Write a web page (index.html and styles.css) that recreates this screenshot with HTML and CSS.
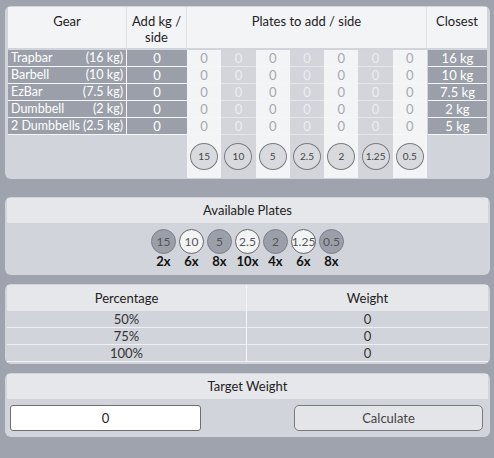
FILE: index.html
```html
<!DOCTYPE html>
<html>
<head>
<meta charset="utf-8">
<link rel="stylesheet" href="styles.css">
</head>
<body>
<main class="page">
  <section class="card gear-card">
    <div class="gear-grid">
      <div class="hd hd-gear">Gear</div>
      <div class="hd hd-add">Add kg /<br>side</div>
      <div class="hd hd-plates">Plates to add / side</div>
      <div class="hd hd-closest">Closest</div>

      <div class="cell gear"><span>Trapbar</span><span>(16 kg)</span></div>
      <div class="cell add">0</div>
      <div class="cell pl lt">0</div><div class="cell pl dk">0</div><div class="cell pl lt">0</div><div class="cell pl dk">0</div><div class="cell pl lt">0</div><div class="cell pl dk">0</div><div class="cell pl lt">0</div>
      <div class="cell closest">16 kg</div>

      <div class="cell gear"><span>Barbell</span><span>(10 kg)</span></div>
      <div class="cell add">0</div>
      <div class="cell pl lt">0</div><div class="cell pl dk">0</div><div class="cell pl lt">0</div><div class="cell pl dk">0</div><div class="cell pl lt">0</div><div class="cell pl dk">0</div><div class="cell pl lt">0</div>
      <div class="cell closest">10 kg</div>

      <div class="cell gear"><span>EzBar</span><span>(7.5 kg)</span></div>
      <div class="cell add">0</div>
      <div class="cell pl lt">0</div><div class="cell pl dk">0</div><div class="cell pl lt">0</div><div class="cell pl dk">0</div><div class="cell pl lt">0</div><div class="cell pl dk">0</div><div class="cell pl lt">0</div>
      <div class="cell closest">7.5 kg</div>

      <div class="cell gear"><span>Dumbbell</span><span>(2 kg)</span></div>
      <div class="cell add">0</div>
      <div class="cell pl lt">0</div><div class="cell pl dk">0</div><div class="cell pl lt">0</div><div class="cell pl dk">0</div><div class="cell pl lt">0</div><div class="cell pl dk">0</div><div class="cell pl lt">0</div>
      <div class="cell closest">2 kg</div>

      <div class="cell gear"><span>2 Dumbbells</span><span>(2.5 kg)</span></div>
      <div class="cell add">0</div>
      <div class="cell pl lt">0</div><div class="cell pl dk">0</div><div class="cell pl lt">0</div><div class="cell pl dk">0</div><div class="cell pl lt">0</div><div class="cell pl dk">0</div><div class="cell pl lt">0</div>
      <div class="cell closest">5 kg</div>

      <div class="foot"></div>
      <div class="foot"></div>
      <div class="foot lt"><span class="disc">15</span></div>
      <div class="foot dk"><span class="disc">10</span></div>
      <div class="foot lt"><span class="disc">5</span></div>
      <div class="foot dk"><span class="disc">2.5</span></div>
      <div class="foot lt"><span class="disc">2</span></div>
      <div class="foot dk"><span class="disc">1.25</span></div>
      <div class="foot lt"><span class="disc">0.5</span></div>
      <div class="foot"></div>
    </div>
  </section>

  <section class="card avail-card">
    <div class="card-hd">Available Plates</div>
    <div class="avail">
      <div class="avail-item"><span class="chip dark">15</span><b>2x</b></div>
      <div class="avail-item"><span class="chip light">10</span><b>6x</b></div>
      <div class="avail-item"><span class="chip dark">5</span><b>8x</b></div>
      <div class="avail-item"><span class="chip light">2.5</span><b>10x</b></div>
      <div class="avail-item"><span class="chip dark">2</span><b>4x</b></div>
      <div class="avail-item"><span class="chip light">1.25</span><b>6x</b></div>
      <div class="avail-item"><span class="chip dark">0.5</span><b>8x</b></div>
    </div>
  </section>

  <section class="card pct-card">
    <div class="pct-grid">
      <div class="pct-hd">Percentage</div>
      <div class="pct-hd">Weight</div>
      <div class="pct-cell">50%</div><div class="pct-cell">0</div>
      <div class="pct-cell">75%</div><div class="pct-cell">0</div>
      <div class="pct-cell">100%</div><div class="pct-cell">0</div>
    </div>
  </section>

  <section class="card target-card">
    <div class="card-hd">Target Weight</div>
    <div class="target-row">
      <input class="target-input" type="text" value="0">
      <button class="calc-btn" type="button">Calculate</button>
    </div>
  </section>
</main>
</body>
</html>
```

FILE: styles.css
```css
* { box-sizing: border-box; }
html, body { margin: 0; padding: 0; }
body {
  background: #9ea3ad;
  font-family: "Lato", "Open Sans", sans-serif;
  font-size: 13px;
  color: #222;
  width: 494px;
  height: 458px;
  overflow: hidden;
}
.page {
  padding: 6px 4px 0 5px;
  display: flex;
  flex-direction: column;
}
.card {
  background: #d1d4da;
  border-radius: 6px;
  overflow: hidden;
}
.gear-card { padding: 1px 3px 0 3px; height: 173px; }
.avail-card { margin-top: 18px; padding: 1px 2px 0 2px; height: 78px; }
.pct-card { margin-top: 9px; padding: 1px 2px 0 2px; height: 80px; }
.target-card { margin-top: 9px; padding: 1px 2px 0 2px; height: 64px; }

.gear-grid {
  display: grid;
  grid-template-columns: 119px 60px repeat(7, 1fr) 60px;
}
.hd {
  background: #f3f4f6;
  height: 41px;
  margin-bottom: 2px;
  text-align: center;
  padding-top: 6px;
  line-height: 16px;
  font-size: 13px;
  color: #222;
  border-right: 1px solid #e0e2e6;
}
.hd-plates { grid-column: 3 / 10; }
.hd-closest { border-right: none; }
.cell {
  height: 17px;
  line-height: 16px;
  font-size: 13px;
  border-bottom: 1px solid #f5f6f8;
  text-align: center;
  white-space: nowrap;
}
.gear {
  background: #9b9fa9;
  color: #fff;
  display: flex;
  justify-content: space-between;
  gap: 3px;
  font-size: 12.5px;
  padding: 0 3px 0 3px;
  border-right: 1px solid #f5f6f8;
}
.add { background: #9b9fa9; color: #fff; }
.closest { background: #9b9fa9; color: #fff; margin-left: 1px; }
.pl.lt { background: #f3f4f6; color: #a6a9b0; }
.pl.dk { background: #d3d5da; color: #eceef1; border-bottom-color: #e4e6e9; }
.foot {
  height: 43px;
  display: flex;
  align-items: center;
  justify-content: center;
}
.foot.lt { background: #f3f4f6; }
.foot.dk { background: #d3d5da; }
.disc {
  width: 28px;
  height: 27px;
  border-radius: 50%;
  border: 1px solid #7a7d84;
  background: #d8dade;
  font-size: 10px;
  color: #444;
  display: flex;
  align-items: center;
  justify-content: center;
  margin-top: -1px;
}

.card-hd {
  background: #e6e7ea;
  height: 25px;
  line-height: 25px;
  text-align: center;
  font-size: 13px;
  color: #222;
}
.avail {
  display: flex;
  justify-content: center;
  gap: 3px;
  padding-top: 6px;
}
.avail-item {
  display: flex;
  flex-direction: column;
  align-items: center;
  width: 25px;
}
.avail-item b {
  font-size: 13px;
  line-height: 14px;
  color: #111;
  white-space: nowrap;
}
.chip {
  width: 25px;
  height: 25px;
  border-radius: 50%;
  display: flex;
  align-items: center;
  justify-content: center;
  font-size: 12px;
  color: #555;
}
.chip.dark { background: #9b9fa9; border: 1px solid #7c8089; }
.chip.light { background: #f3f4f6; border: 1px solid #666; }

.pct-grid {
  display: grid;
  grid-template-columns: 240px 1fr;
}
.pct-hd {
  background: #e6e7ea;
  height: 26px;
  line-height: 26px;
  text-align: center;
  font-size: 13px;
  color: #222;
}
.pct-hd:first-child, .pct-cell:nth-child(odd) { border-right: 1px solid #f3f4f6; }
.pct-cell {
  height: 17px;
  line-height: 16px;
  text-align: center;
  font-size: 13px;
  color: #333;
  border-bottom: 1px solid #eef0f2;
}

.target-row {
  display: flex;
  justify-content: space-between;
  padding: 6px 5px 0 3px;
}
.target-input {
  width: 191px;
  height: 26px;
  border: 1px solid #6e6e6e;
  border-radius: 3px;
  background: #fff;
  text-align: center;
  font-family: inherit;
  font-size: 13px;
  color: #222;
  padding: 0;
  outline: none;
}
.calc-btn {
  width: 189px;
  height: 26px;
  border: 1px solid #7a7a7a;
  border-radius: 5px;
  background: #e4e5e8;
  font-family: inherit;
  font-size: 13px;
  color: #444;
  padding: 0;
}
```
